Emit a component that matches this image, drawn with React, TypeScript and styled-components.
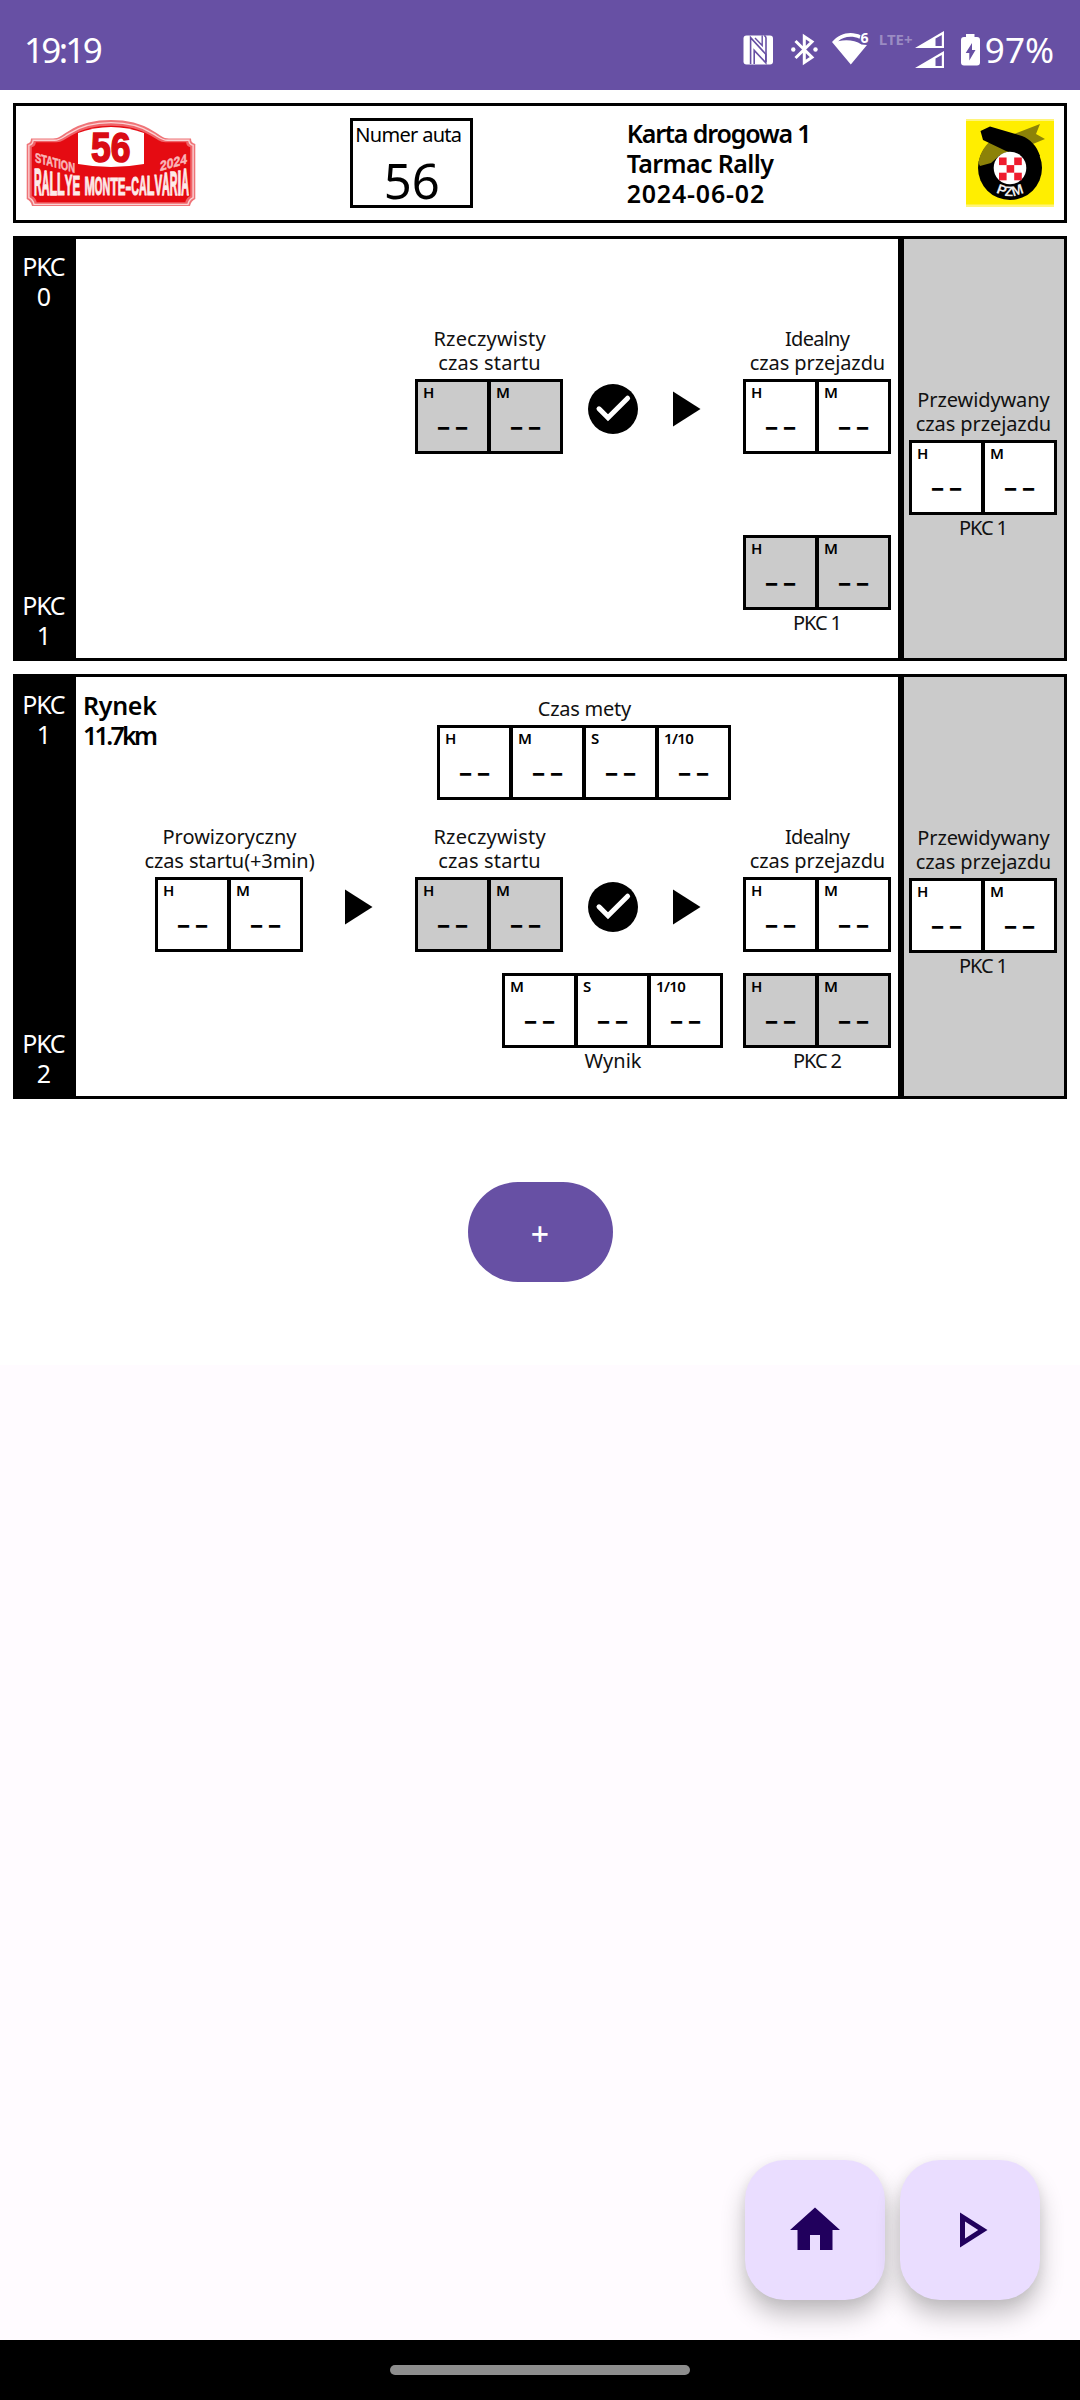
import React from "react";
import styled, { createGlobalStyle } from "styled-components";

const Global = createGlobalStyle`
  *, *::before, *::after { box-sizing: border-box; }
  body { margin: 0; background: #fffbff; }
`;

const Page = styled.div`
  width: 1080px;
  height: 2400px;
  display: flex;
  flex-direction: column;
  overflow: hidden;
  color: #000;
  font-family: "Noto Sans", "Open Sans", sans-serif;
`;

/* Tracked text; the negative margin removes the spacing after the last glyph. */
const T = styled.span<{ $ls?: number }>`
  display: inline-block;
  white-space: nowrap;
  letter-spacing: ${(p) => p.$ls ?? 0}px;
  margin-right: ${(p) => -(p.$ls ?? 0)}px;
`;

/* ---------- status bar ---------- */

const StatusBar = styled.header`
  height: 90px;
  flex: none;
  display: flex;
  justify-content: space-between;
  align-items: flex-start;
  padding: 0 26px 0 24px;
  background: #6750a4;
  color: #fff;
`;

const StatusText = styled.div`
  margin-top: 29px;
  font-size: 35px;
  line-height: 41px;
`;

const StatusIcons = styled.div`
  display: flex;
  align-items: flex-start;
  > svg { display: block; margin-top: 20px; height: 60px; fill: #fff; }
`;

const Gap = styled.i<{ $w: number }>`
  width: ${(p) => p.$w}px;
`;

const Lte = styled.span`
  width: 33px;
  margin-top: 30px;
  font-size: 15px;
  font-weight: 700;
  line-height: 18px;
  color: rgba(255, 255, 255, 0.35);
`;

const Wifi6 = styled.text`
  font: 700 14px "Noto Sans", sans-serif;
`;

/* ---------- sheet ---------- */

const Sheet = styled.main`
  flex: none;
  height: 1275px;
  padding: 13px;
  display: flex;
  flex-direction: column;
  gap: 13px;
  background: #fff;
`;

const CardHeader = styled.section`
  height: 120px;
  border: 3px solid #000;
  padding: 0 10px;
  display: flex;
  align-items: center;
  justify-content: space-between;
`;

const NumberBox = styled.div`
  width: 123px;
  height: 90px;
  border: 3px solid #000;
  padding: 2px 0 0 2px;
  font-size: 20px;
  line-height: 24px;
`;

const CarNumber = styled.div`
  margin: 8px 0 0 -2px;
  text-align: center;
  font-size: 49px;
  line-height: 50px;
`;

const CardTitle = styled.div`
  width: 184px;
  display: flex;
  flex-direction: column;
  margin: 0 1px 0 -1px;
  font-size: 25px;
  font-weight: 600;
  line-height: 30px;
`;

const StageRow = styled.section`
  height: 425px;
  border: 3px solid #000;
  display: flex;
`;

const Controls = styled.div`
  width: 60px;
  padding: 12px 4px 8px 0;
  display: flex;
  flex-direction: column;
  justify-content: space-between;
  background: #000;
  color: #fff;
  font-size: 25px;
  line-height: 30px;
  text-align: center;
`;

const StageBody = styled.div<{ $top: number }>`
  width: 822px;
  padding-top: ${(p) => p.$top}px;
`;

const Forecast = styled.aside`
  width: 166px;
  border-left: 6px solid #000;
  padding: 149px 0 0 5px;
  background: #cbcbcb;
`;

const FinishLine = styled.div`
  display: grid;
  grid-template-columns: 361px 294px;
  margin-bottom: 25px;
`;

const StageName = styled.div`
  display: flex;
  flex-direction: column;
  padding-left: 7px;
  font-size: 25px;
  font-weight: 600;
  line-height: 30px;
`;

const StartLine = styled.div`
  display: flex;
  justify-content: flex-end;
  align-items: flex-end;
  padding-right: 7px;
`;

const ResultLine = styled.div<{ $gap: number }>`
  display: flex;
  justify-content: flex-end;
  gap: 20px;
  margin-top: ${(p) => p.$gap}px;
  padding-right: 7px;
`;

const IconSlot = styled.div<{ $l: number; $r: number }>`
  width: 60px;
  height: 60px;
  margin: 0 ${(p) => p.$r}px 15px ${(p) => p.$l}px;
  > svg { display: block; }
`;

const ClockBlock = styled.div<{ $w?: number; $mt?: number }>`
  width: ${(p) => (p.$w ? `${p.$w}px` : "max-content")};
  margin-top: ${(p) => p.$mt ?? 0}px;
  display: flex;
  flex-direction: column;
  align-items: center;
`;

const Caption = styled.div<{ $above?: boolean }>`
  display: flex;
  flex-direction: column;
  align-items: center;
  padding-left: 1px;
  margin: ${(p) => (p.$above ? "0 0 4px" : "1px 0 0")};
  font-size: 20px;
  line-height: 24px;
  color: #111;
`;

const Cells = styled.div<{ $shaded?: boolean }>`
  display: flex;
  gap: 4px;
  height: 75px;
  padding: 3px;
  background: #000;
  > div { background: ${(p) => (p.$shaded ? "#cbcbcb" : "#fff")}; }
`;

const Cell = styled.div`
  width: 69px;
  height: 69px;
  padding-top: 1px;
`;

const Unit = styled.div`
  padding-left: 5px;
  font-size: 15px;
  font-weight: 600;
  line-height: 18px;
`;

const Value = styled.div`
  margin-top: 4px;
  text-align: center;
  font: 400 35px/42px Inter, sans-serif;
`;

const AddButton = styled.button`
  align-self: center;
  width: 145px;
  height: 100px;
  margin-top: 70px;
  padding: 4px 0 0 0;
  border: 0;
  border-radius: 50px;
  background: #6750a4;
  color: #fff;
  font: 500 32px/40px "Noto Sans", sans-serif;
`;

/* ---------- bottom ---------- */

const Actions = styled.div`
  flex: 1;
  display: flex;
  justify-content: flex-end;
  align-items: flex-end;
  gap: 15px;
  padding: 0 40px 40px 0;
  background: #fffbff;
`;

const Fab = styled.button`
  width: 140px;
  height: 140px;
  padding: 0;
  border: 0;
  border-radius: 40px;
  display: flex;
  align-items: center;
  justify-content: center;
  background: #eaddff;
  box-shadow: 0 15px 24px rgba(0, 0, 0, 0.24), 0 2px 12px rgba(0, 0, 0, 0.06);
`;

const NavBar = styled.footer`
  flex: none;
  position: relative;
  height: 60px;
  display: flex;
  justify-content: center;
  padding-top: 25px;
  background: #000;
`;

const NavPill = styled.div`
  width: 300px;
  height: 10px;
  border-radius: 5px;
  background: #8e8e8e;
`;

/* ---------- drawings ---------- */

const BANNER = "RALLYE MONTE-CALVARIA";

function bannerLetters() {
  const left = 8;
  const right = 163;
  const widths = BANNER.split("").map((c) =>
    c === " " ? 0.55 : c === "M" ? 1.35 : c === "-" ? 0.75 : c === "I" ? 0.5 : 1
  );
  const unit = (right - left) / widths.reduce((a, b) => a + b, 0);
  let x = left;
  return BANNER.split("").map((c, i) => {
    const w = widths[i] * unit;
    const mid = (x + w / 2 - 85.5) / 77;
    const height = 17.5 + 10 * mid * mid;
    const item = { c, x, w, sy: height / 14.3 };
    x += w;
    return item;
  });
}

const PlateText = styled.text`
  font-family: "Liberation Sans", Arial, sans-serif;
  font-weight: 700;
`;

function RallyLogo() {
  const shape =
    "M5 19.5H27C33 19.5 36 16 42 12.5C55 4 69 1 85 1S115 4 128 12.5C134 16 137 19.5 143 19.5H165Q165 24 169.3 25V80Q165 82 164 87H6Q5 82 .7 80V25Q5 24 5 19.5Z";
  return (
    <svg width="170" height="88" viewBox="0 0 170 88">
      <path d={shape} fill="#ef7478" />
      <path
        transform="translate(85 45) scale(.974 .95) translate(-85 -44.5)"
        d={shape} fill="#f06469" stroke="#fbd3d4" strokeWidth="1.4"
      />
      <path
        transform="translate(85 45.5) scale(.94 .89) translate(-85 -44.5)"
        d={shape} fill="#e50b12"
      />
      <path d="M52 14Q68 8 85 8T118 14V45Q85 51 52 45Z" fill="#fff" />
      <PlateText x="65" y="43" fontSize="42" textLength="39.5" lengthAdjust="spacingAndGlyphs" fill="#d90c14" stroke="#d90c14" strokeWidth="1.6">56</PlateText>
      <PlateText transform="translate(9 43) skewY(15)" fontSize="13.5" textLength="40" lengthAdjust="spacingAndGlyphs" fill="#f9b8ba" stroke="#f9b8ba" strokeWidth=".5">STATION</PlateText>
      <PlateText transform="translate(134 52) skewY(-16)" fontSize="13.5" textLength="27" lengthAdjust="spacingAndGlyphs" fill="#f9b8ba" stroke="#f9b8ba" strokeWidth=".5">2024</PlateText>
      {bannerLetters().map((l, i) =>
        l.c === " " ? null : (
          <PlateText
            key={i}
            transform={`translate(${l.x} 76) scale(1 ${l.sy})`}
            fontSize="20"
            textLength={l.w}
            lengthAdjust="spacingAndGlyphs"
            fill="#fdeaea"
            stroke="#fdeaea"
            strokeWidth=".8"
          >
            {l.c}
          </PlateText>
        )
      )}
    </svg>
  );
}

function PzmLogo() {
  return (
    <svg width="88" height="88" viewBox="0 0 88 88">
      <rect width="88" height="88" fill="#ffee00" />
      <rect width="88" height="2" fill="#fff47a" />
      <rect y="85.5" width="88" height="2.5" fill="#fff47a" />
      <path d="M48 15L74 5L70 15L79 20L62 27Z" fill="#8c8208" />
      <circle cx="44" cy="49" r="32" fill="#000" />
      <path d="M12.5 44C14 33 20 25 26 21L47 30L34 36L25 44L14 47Z" fill="#8c8208" />
      <path d="M24 7.5L14.5 12L17 21L40 32C50 32 58 36 62 44L74 37C71 27 64 20 56 17Z" fill="#000" />
      <circle cx="44" cy="49" r="16.3" fill="#fff" />
      <g fill="#ee1c2e">
        <rect x="33" y="38.5" width="7.6" height="7.6" />
        <rect x="48.2" y="38.5" width="7.6" height="7.6" />
        <rect x="40.6" y="46.1" width="7.6" height="7.6" />
        <rect x="33" y="53.7" width="7.6" height="7.6" />
        <rect x="48.2" y="53.7" width="7.6" height="7.6" />
      </g>
      <path id="pzm-arc" d="M20 64A28.5 28.5 0 0 0 68 64" fill="none" />
      <PlateText fontSize="14" fill="#eee" textAnchor="middle">
        <textPath href="#pzm-arc" startOffset="50%">PZM</textPath>
      </PlateText>
    </svg>
  );
}

const Check = () => (
  <svg width="60" height="60" viewBox="0 0 60 60">
    <circle cx="30" cy="30" r="25" fill="#000" />
    <path d="M16 29.8L25 38.8L44.6 19.2" fill="none" stroke="#fff" strokeWidth="5" strokeLinecap="round" />
  </svg>
);

const Arrow = () => (
  <svg width="60" height="60" viewBox="0 0 24 24">
    <path d="M8 5v14l11-7z" fill="#000" />
  </svg>
);

/* ---------- parts ---------- */

type Line = [string, number];

const CaptionText = ({ lines, above }: { lines: Line[]; above?: boolean }) => (
  <Caption $above={above}>
    {lines.map(([text, ls]) => (
      <T key={text} $ls={ls}>{text}</T>
    ))}
  </Caption>
);

interface ClockProps {
  units: string[];
  above?: Line[];
  below?: Line;
  shaded?: boolean;
  width?: number;
  top?: number;
}

const Clock = ({ units, above, below, shaded, width, top }: ClockProps) => (
  <ClockBlock $w={width} $mt={top}>
    {above && <CaptionText lines={above} above />}
    <Cells $shaded={shaded}>
      {units.map((u) => (
        <Cell key={u}>
          <Unit><T $ls={u === "1/10" ? -0.6 : 0}>{u}</T></Unit>
          <Value><T $ls={2}>--</T></Value>
        </Cell>
      ))}
    </Cells>
    {below && <CaptionText lines={[below]} />}
  </ClockBlock>
);

const HM = ["H", "M"];
const IDEAL: Line[] = [["Idealny", -0.75], ["czas przejazdu", -0.1]];
const ACTUAL: Line[] = [["Rzeczywisty", 0.2], ["czas startu", 0.15]];
const EXPECTED: Line[] = [["Przewidywany", -0.1], ["czas przejazdu", -0.1]];
const PROVISIONAL: Line[] = [["Prowizoryczny", 0], ["czas startu(+3min)", -0.1]];

interface StageProps {
  from: number;
  to: number;
  special?: { name: string; distance: string };
}

const Stage = ({ from, to, special }: StageProps) => (
  <StageRow>
    <Controls>
      <div><T $ls={-1.3}>PKC</T><br />{from}</div>
      <div><T $ls={-1.3}>PKC</T><br />{to}</div>
    </Controls>
    <StageBody $top={special ? 13 : 88}>
      {special && (
        <FinishLine>
          <StageName>
            <T $ls={-0.3}>{special.name}</T>
            <T $ls={-2.7}>{special.distance}</T>
          </StageName>
          <Clock units={["H", "M", "S", "1/10"]} above={[["Czas mety", -0.25]]} top={7} />
        </FinishLine>
      )}
      <StartLine>
        {special && (
          <>
            <Clock units={HM} above={PROVISIONAL} width={170} />
            <IconSlot $l={11} $r={30}><Arrow /></IconSlot>
          </>
        )}
        <Clock units={HM} above={ACTUAL} shaded />
        <IconSlot $l={20} $r={10}><Check /></IconSlot>
        <IconSlot $l={0} $r={30}><Arrow /></IconSlot>
        <Clock units={HM} above={IDEAL} />
      </StartLine>
      <ResultLine $gap={special ? 21 : 81}>
        {special && <Clock units={["M", "S", "1/10"]} below={["Wynik", 0]} />}
        <Clock units={HM} below={[`PKC ${to}`, -1.1]} shaded />
      </ResultLine>
    </StageBody>
    <Forecast>
      <Clock units={HM} above={EXPECTED} below={["PKC 1", -1.1]} />
    </Forecast>
  </StageRow>
);

const Status = () => (
  <StatusBar>
    <StatusText><T $ls={-2.7}>19:19</T></StatusText>
    <StatusIcons>
      <svg width="30" viewBox="743 20 30 60">
        <rect x="743.5" y="35.5" width="29.5" height="29" rx="3" />
        <path d="M750.5 64.5V39L765.8 55.5V35.5" fill="none" stroke="#6750a4" strokeWidth="0" />
        <path d="M750.6 64V37.6L765.8 54.2V62.8L754.2 50.4V64" fill="none" stroke="#6750a4" strokeWidth="1.6" />
        <path d="M766 62V38Q766 36.5 764.3 35.5" fill="none" stroke="#6750a4" strokeWidth="1.6" />
        <path d="M762.2 35.5V45.5L755 38" fill="none" stroke="#6750a4" strokeWidth="1.4" />
      </svg>
      <Gap $w={18} />
      <svg width="27" viewBox="791 20 27 60">
        <path d="M795.5 41L812 57.3L804.3 62.5V36.5L812 41.8L795.5 58" fill="none" stroke="#fff" strokeWidth="3" />
        <circle cx="793.3" cy="49.5" r="2.2" />
        <circle cx="815.5" cy="49.5" r="2.2" />
      </svg>
      <Gap $w={14} />
      <svg width="37" viewBox="832 20 37 60">
        <path d="M832 42C837 36 844 33 850.5 33C854 33 858 34 860.5 35.2L859.5 38.8C856.5 37.4 853.5 36.8 850.5 36.8C845.5 36.8 841.5 38.5 838.2 41.2C846 39.5 855 40 861.5 44.5L867 45L850.8 64.5Z" />
        <Wifi6 x="860.5" y="43.3">6</Wifi6>
      </svg>
      <Gap $w={10} />
      <Lte>LTE+</Lte>
      <Gap $w={3} />
      <svg width="30" viewBox="915 20 30 60">
        <path fillRule="evenodd" d="M915 48L944 31V48ZM935.5 38.5V46H941.8V35Z" />
        <path fillRule="evenodd" d="M915 68L944 51V68ZM935.5 58.5V66H941.8V55Z" />
      </svg>
      <Gap $w={16} />
      <svg width="20" viewBox="961 20 20 60">
        <path d="M966 37V34H974.5V37H977Q980 37 980 40V62.5Q980 65.5 977 65.5H964Q961 65.5 961 62.5V40Q961 37 964 37Z" />
        <path d="M972 43L965.7 53H969.3V60.5L975.5 50H972Z" fill="#6750a4" />
      </svg>
      <Gap $w={4} />
      <StatusText><T>97%</T></StatusText>
    </StatusIcons>
  </StatusBar>
);

export default function App() {
  return (
    <Page>
      <Global />
      <Status />
      <Sheet>
        <CardHeader>
          <RallyLogo />
          <NumberBox>
            <T $ls={-0.7}>Numer auta</T>
            <CarNumber>56</CarNumber>
          </NumberBox>
          <CardTitle>
            <T $ls={-1.15}>Karta drogowa 1</T>
            <T $ls={-0.6}>Tarmac Rally</T>
            <T $ls={0.8}>2024-06-02</T>
          </CardTitle>
          <PzmLogo />
        </CardHeader>
        <Stage from={0} to={1} />
        <Stage from={1} to={2} special={{ name: "Rynek", distance: "11.7km" }} />
        <AddButton>+</AddButton>
      </Sheet>
      <Actions>
        <Fab aria-label="Home">
          <svg width="60" height="60" viewBox="0 0 24 24" fill="#21005d">
            <path d="M10 20v-6h4v6h5v-8h3L12 3 2 12h3v8z" />
          </svg>
        </Fab>
        <Fab aria-label="Start">
          <svg width="60" height="60" viewBox="0 0 24 24" fill="#21005d">
            <path d="M10 8.64L15.27 12 10 15.36V8.64M8 5v14l11-7L8 5z" />
          </svg>
        </Fab>
      </Actions>
      <NavBar><NavPill /></NavBar>
    </Page>
  );
}
